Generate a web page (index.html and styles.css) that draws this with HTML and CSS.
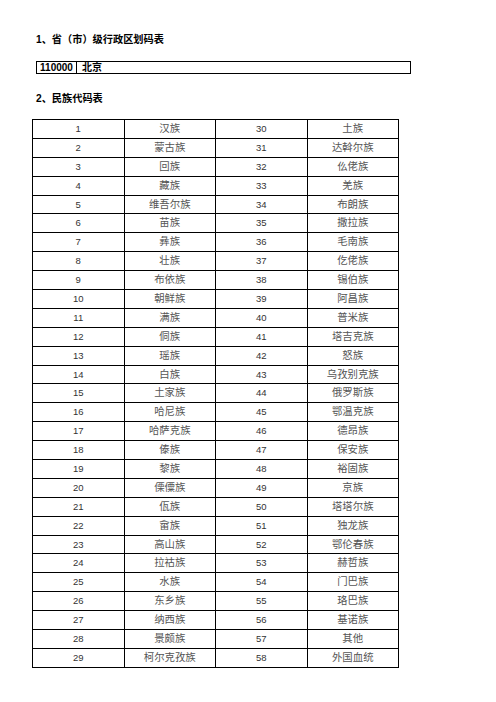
FILE: index.html
```html
<!DOCTYPE html>
<html lang="zh">
<head>
<meta charset="utf-8">
<link rel="stylesheet" href="styles.css">
</head>
<body>
<div class="page">
  <h2 class="title t1">1、省（市）级行政区划码表</h2>
  <div class="region">
    <div class="code">110000</div>
    <div class="name">北京</div>
  </div>
  <h2 class="title t2">2、民族代码表</h2>
  <table class="nations">
    <tbody>
      <tr><td>1</td><td>汉族</td><td>30</td><td>土族</td></tr>
      <tr><td>2</td><td>蒙古族</td><td>31</td><td>达斡尔族</td></tr>
      <tr><td>3</td><td>回族</td><td>32</td><td>仫佬族</td></tr>
      <tr><td>4</td><td>藏族</td><td>33</td><td>羌族</td></tr>
      <tr><td>5</td><td>维吾尔族</td><td>34</td><td>布朗族</td></tr>
      <tr><td>6</td><td>苗族</td><td>35</td><td>撒拉族</td></tr>
      <tr><td>7</td><td>彝族</td><td>36</td><td>毛南族</td></tr>
      <tr><td>8</td><td>壮族</td><td>37</td><td>仡佬族</td></tr>
      <tr><td>9</td><td>布依族</td><td>38</td><td>锡伯族</td></tr>
      <tr><td>10</td><td>朝鲜族</td><td>39</td><td>阿昌族</td></tr>
      <tr><td>11</td><td>满族</td><td>40</td><td>普米族</td></tr>
      <tr><td>12</td><td>侗族</td><td>41</td><td>塔吉克族</td></tr>
      <tr><td>13</td><td>瑶族</td><td>42</td><td>怒族</td></tr>
      <tr><td>14</td><td>白族</td><td>43</td><td>乌孜别克族</td></tr>
      <tr><td>15</td><td>土家族</td><td>44</td><td>俄罗斯族</td></tr>
      <tr><td>16</td><td>哈尼族</td><td>45</td><td>鄂温克族</td></tr>
      <tr><td>17</td><td>哈萨克族</td><td>46</td><td>德昂族</td></tr>
      <tr><td>18</td><td>傣族</td><td>47</td><td>保安族</td></tr>
      <tr><td>19</td><td>黎族</td><td>48</td><td>裕固族</td></tr>
      <tr><td>20</td><td>傈僳族</td><td>49</td><td>京族</td></tr>
      <tr><td>21</td><td>佤族</td><td>50</td><td>塔塔尔族</td></tr>
      <tr><td>22</td><td>畲族</td><td>51</td><td>独龙族</td></tr>
      <tr><td>23</td><td>高山族</td><td>52</td><td>鄂伦春族</td></tr>
      <tr><td>24</td><td>拉祜族</td><td>53</td><td>赫哲族</td></tr>
      <tr><td>25</td><td>水族</td><td>54</td><td>门巴族</td></tr>
      <tr><td>26</td><td>东乡族</td><td>55</td><td>珞巴族</td></tr>
      <tr><td>27</td><td>纳西族</td><td>56</td><td>基诺族</td></tr>
      <tr><td>28</td><td>景颇族</td><td>57</td><td>其他</td></tr>
      <tr><td>29</td><td>柯尔克孜族</td><td>58</td><td>外国血统</td></tr>
    </tbody>
  </table>
</div>
</body>
</html>
```

FILE: styles.css
```css
html, body {
  margin: 0;
  padding: 0;
  background: #ffffff;
}

.page {
  padding: 33px 0 0 32px;
  font-family: "Liberation Serif", "Noto Sans CJK SC", serif;
  color: #000;
}

.title {
  margin: 0;
  font-family: "Liberation Sans", "Noto Sans CJK SC", sans-serif;
  font-size: 10.2px;
  font-weight: bold;
  line-height: 14px;
  height: 14px;
}

.t1 {
  padding-left: 4px;
}

.t2 {
  margin-top: 18px;
  padding-left: 4px;
}

.region {
  margin: 14px 0 0 4px;
  width: 373px;
  height: 11px;
  border: 1px solid #000;
  display: flex;
  font-family: "Liberation Sans", "Noto Sans CJK SC", sans-serif;
  font-size: 10px;
  font-weight: bold;
  line-height: 11px;
}

.region .code {
  width: 40px;
  border-right: 1px solid #000;
  text-align: center;
  box-sizing: border-box;
}

.region .name {
  padding-left: 5px;
}

.nations {
  margin-top: 13px;
  border-collapse: collapse;
  width: 367px;
  table-layout: fixed;
  border: 1px solid #000;
}

.nations td {
  border: 1px solid #000;
  height: 17.9px;
  padding: 0;
  text-align: center;
  font-size: 10.4px;
  line-height: 12px;
  color: #555;
  font-family: "Liberation Serif", "Noto Sans CJK SC", serif;
}

.nations td:nth-child(odd) {
  font-family: "Liberation Sans", sans-serif;
  font-size: 9.5px;
  color: #333;
}
```
